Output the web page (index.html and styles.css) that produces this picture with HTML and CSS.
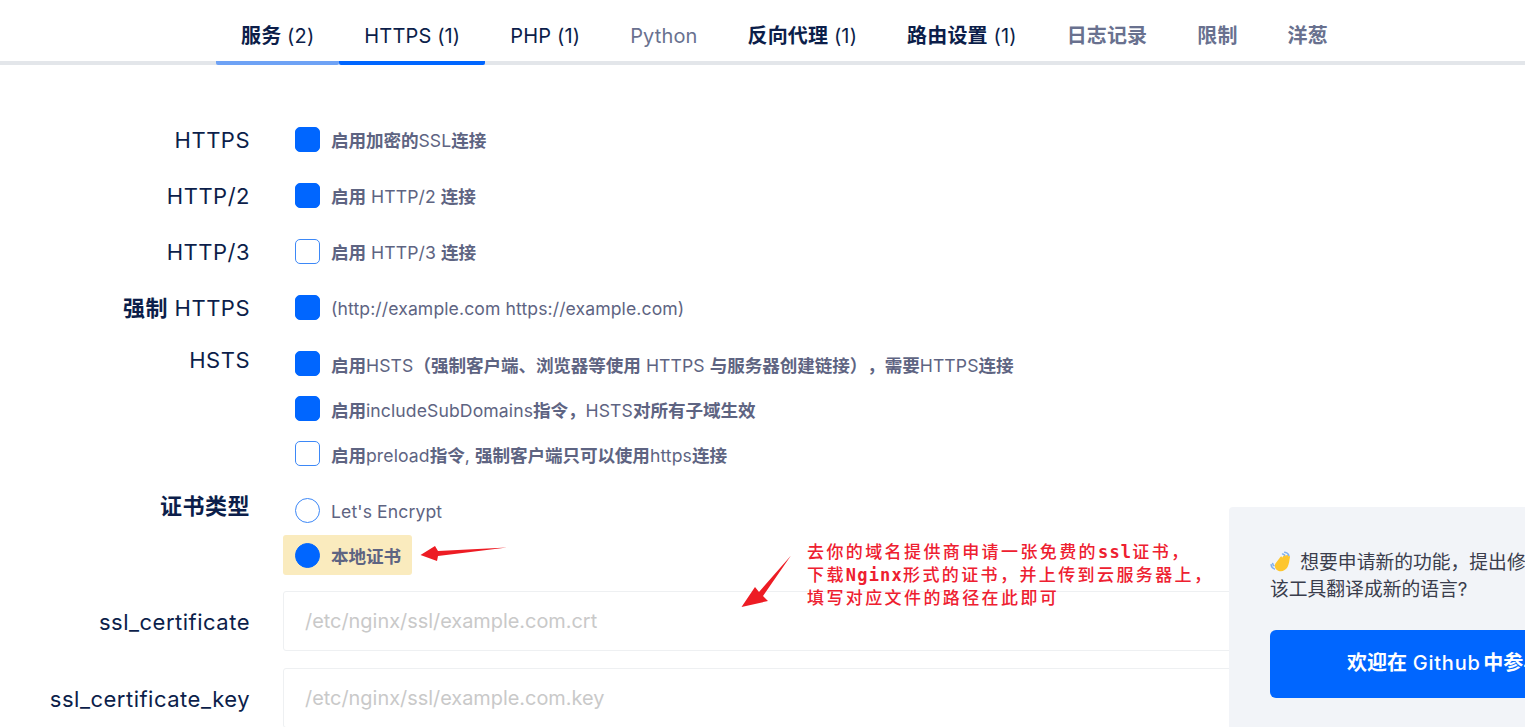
FILE: index.html
```html
<!DOCTYPE html>
<html lang="zh-CN">
<head>
<meta charset="utf-8">
<title>HTTPS</title>
<link rel="stylesheet" href="styles.css">
</head>
<body>
<nav class="tabs">
  <a class="tab tab-hover"><b>服务</b> (2)</a>
  <a class="tab tab-active">HTTPS (1)</a>
  <a class="tab">PHP (1)</a>
  <a class="tab tab-muted">Python</a>
  <a class="tab"><b>反向代理</b> (1)</a>
  <a class="tab"><b>路由设置</b> (1)</a>
  <a class="tab tab-muted"><b>日志记录</b></a>
  <a class="tab tab-muted"><b>限制</b></a>
  <a class="tab tab-muted"><b>洋葱</b></a>
</nav>

<form class="form">
  <div class="row">
    <div class="label">HTTPS</div>
    <div class="controls"><label class="opt"><span class="box on"></span><span><b>启用加密的</b>SSL<b>连接</b></span></label></div>
  </div>
  <div class="row">
    <div class="label">HTTP/2</div>
    <div class="controls"><label class="opt"><span class="box on"></span><span><b>启用</b> HTTP/2 <b>连接</b></span></label></div>
  </div>
  <div class="row">
    <div class="label">HTTP/3</div>
    <div class="controls"><label class="opt"><span class="box"></span><span><b>启用</b> HTTP/3 <b>连接</b></span></label></div>
  </div>
  <div class="row">
    <div class="label"><b>强制</b> HTTPS</div>
    <div class="controls"><label class="opt"><span class="box on"></span><span>(http://example.com https://example.com)</span></label></div>
  </div>
  <div class="row row-stack">
    <div class="label label-top">HSTS</div>
    <div class="controls">
      <label class="opt opt-tight"><span class="box on"></span><span><b>启用</b>HSTS<b>（强制客户端、浏览器等使用</b> HTTPS <b>与服务器创建链接），需要</b>HTTPS<b>连接</b></span></label>
      <label class="opt opt-tight"><span class="box on"></span><span><b>启用</b>includeSubDomains<b>指令，</b>HSTS<b>对所有子域生效</b></span></label>
      <label class="opt opt-tight"><span class="box"></span><span><b>启用</b>preload<b>指令</b>, <b>强制客户端只可以使用</b>https<b>连接</b></span></label>
    </div>
  </div>
  <div class="row row-stack row-cert">
    <div class="label label-cert"><b>证书类型</b></div>
    <div class="controls">
      <label class="opt opt-radio"><span class="box round"></span><span>Let's Encrypt</span></label>
      <label class="opt opt-radio opt-marked"><span class="box round on"></span><span><b>本地证书</b></span></label>
    </div>
  </div>
  <div class="row row-input">
    <div class="label">ssl_certificate</div>
    <input class="text-input" type="text" placeholder="/etc/nginx/ssl/example.com.crt">
  </div>
  <div class="row row-input">
    <div class="label">ssl_certificate_key</div>
    <input class="text-input" type="text" placeholder="/etc/nginx/ssl/example.com.key">
  </div>
</form>

<svg class="arrows" width="1525" height="727" viewBox="0 0 1525 727" aria-hidden="true">
  <polygon fill="#ed1c24" points="420.5,555 435,546 438,551 507,547.5 438,556 437,561"/>
  <polygon fill="#ed1c24" points="741.5,607 755,587 759,592 791,555.5 763,596 768,601"/>
</svg>
<p class="note">去你的域名提供商申请一张免费的<span class="note-latin">ssl</span>证书，<br>下载<span class="note-latin">Nginx</span>形式的证书，并上传到云服务器上，<br>填写对应文件的路径在此即可</p>

<aside class="panel">
  <p class="panel-text"><svg class="wave" width="24" height="24" viewBox="0 0 22 22" aria-hidden="true"><path fill="#fdc62f" d="M5 11.500 9.500 5.500c.7-1 2-.2 1.400.9l1.800-2.500c.7-1 2.100-.2 1.500.9l.8-.8c.8-.9 2-.1 1.500 1l.4-.3c.8-.6 1.800.2 1.400 1.100-.7 3-.7 6-2.200 8.900-1.800 3.400-5.800 4.700-8.600 3.300C4.400 16.500 3.700 13.700 5 11.500Z"/><path fill="none" stroke="#7fb0ee" stroke-width="1.400" stroke-linecap="round" d="M13.500 1.200c1.700.2 3.200 1.300 3.800 2.900M11.500 2.700c.8.100 1.500.5 1.900 1.100M1 12.500c.2 1.800 1.400 3.300 3 3.900M2.500 11.500c.1.800.5 1.500 1.100 1.900"/></svg> 想要申请新的功能，提出修改建议，或者帮助将<br>该工具翻译成新的语言?</p>
  <a class="panel-btn"><b>欢迎在</b> <span class="btn-latin">Github</span> <b>中参与贡献</b></a>
</aside>
</body>
</html>
```
FILE: styles.css
```css
* { box-sizing: border-box; }
html, body { margin: 0; height: 727px; overflow: hidden; }
body {
  position: relative;
  background: #fff;
  color: #0c1e4a;
  font-family: Inter, "Noto Sans CJK SC", sans-serif;
  text-spacing-trim: space-all;
}
b { font-weight: 700; }

.tabs {
  display: flex;
  height: 65px;
  padding-left: 216px;
  border-bottom: 4px solid #e3e6ea;
}
.tab {
  height: 65px;
  padding: 0 25px;
  font-size: 20px;
  letter-spacing: .15px;
  line-height: 73px;
  white-space: nowrap;
  border-bottom: 4px solid transparent;
}
.tab-hover { border-bottom-color: #6ea2f5; border-radius: 2px; }
.tab-active { border-bottom-color: #0066ff; border-radius: 2px; }
.tab-muted { color: #69718f; }

.form { padding-top: 46px; }
.row {
  display: grid;
  grid-template-columns: 250px 1fr;
  column-gap: 33px;
  height: 56px;
  align-items: center;
}
.row-stack { height: auto; align-items: start; }
.label {
  padding-top: 1px;
  text-align: right;
  font-size: 22px;
  letter-spacing: .5px;
  line-height: 30px;
  white-space: nowrap;
}
.label-top { margin-top: 9px; }
.label-cert { margin-top: 3px; }
.controls { display: flex; flex-direction: column; align-items: flex-start; padding-left: 12px; }
.opt {
  display: flex;
  align-items: center;
  gap: 11px;
  font-size: 17.6px;
  letter-spacing: .1px;
  line-height: 26px;
  color: #5e6482;
  white-space: nowrap;
}
.opt b { letter-spacing: -.1px; }
.opt > span:last-child { padding-top: 4px; }
.opt-tight { height: 45px; }
.opt-radio { height: 46px; }
.opt-marked {
  height: 40px;
  margin: 2px 0 0 -12px;
  padding: 0 11px 0 12px;
  background: #faebbe;
  border-radius: 3px;
}
.row-stack .opt-tight:first-child { margin-top: 6px; }
.row-cert { margin-top: 11px; }
.box {
  flex: none;
  width: 25px;
  height: 25px;
  border: 1px solid #3d88f7;
  border-radius: 5px;
  background: #fff;
}
.box.on { background: #0066ff; border-color: #0066ff; }
.round { border-radius: 50%; }

.row-input { height: 60px; margin-top: 17px; }
.row-cert + .row-input { margin-top: 16px; }
.text-input {
  width: 960px;
  height: 60px;
  padding: 0 21px;
  border: 1px solid #eef0f2;
  border-radius: 3px;
  background: #fff;
  font: 19.9px Inter, "Noto Sans CJK SC", sans-serif;
}
.text-input::placeholder { color: #c9c9c9; opacity: 1; }

.arrows { position: absolute; left: 0; top: 0; pointer-events: none; }
.note {
  position: absolute;
  left: 807px;
  top: 541px;
  margin: 0;
  font: 500 17px/23px "DejaVu Sans Mono", "Noto Sans CJK SC", monospace;
  letter-spacing: 2.4px;
  color: #ee2030;
  text-shadow: 0 0 2px #fff, 0 0 2px #fff;
  white-space: nowrap;
}
.note-latin { font-weight: 700; letter-spacing: 1.2px; }

.panel {
  position: absolute;
  left: 1229px;
  top: 507px;
  width: 525px;
  height: 300px;
  padding: 42px 41px;
  background: #f2f4f8;
  border-radius: 4px;
  color: #3a3d4c;
}
.panel-text {
  margin: 0;
  font-size: 18.8px;
  line-height: 27px;
  white-space: nowrap;
}
.wave { vertical-align: -6px; margin-right: 1px; }
.panel-btn {
  display: block;
  height: 68px;
  margin-top: 27px;
  padding-left: 77px;
  border-radius: 6px;
  background: #0066ff;
  color: #fff;
  font-size: 20px;
  line-height: 66px;
  white-space: nowrap;
}
.btn-latin { margin-right: -3px; font-weight: 500; letter-spacing: .8px; }
```
